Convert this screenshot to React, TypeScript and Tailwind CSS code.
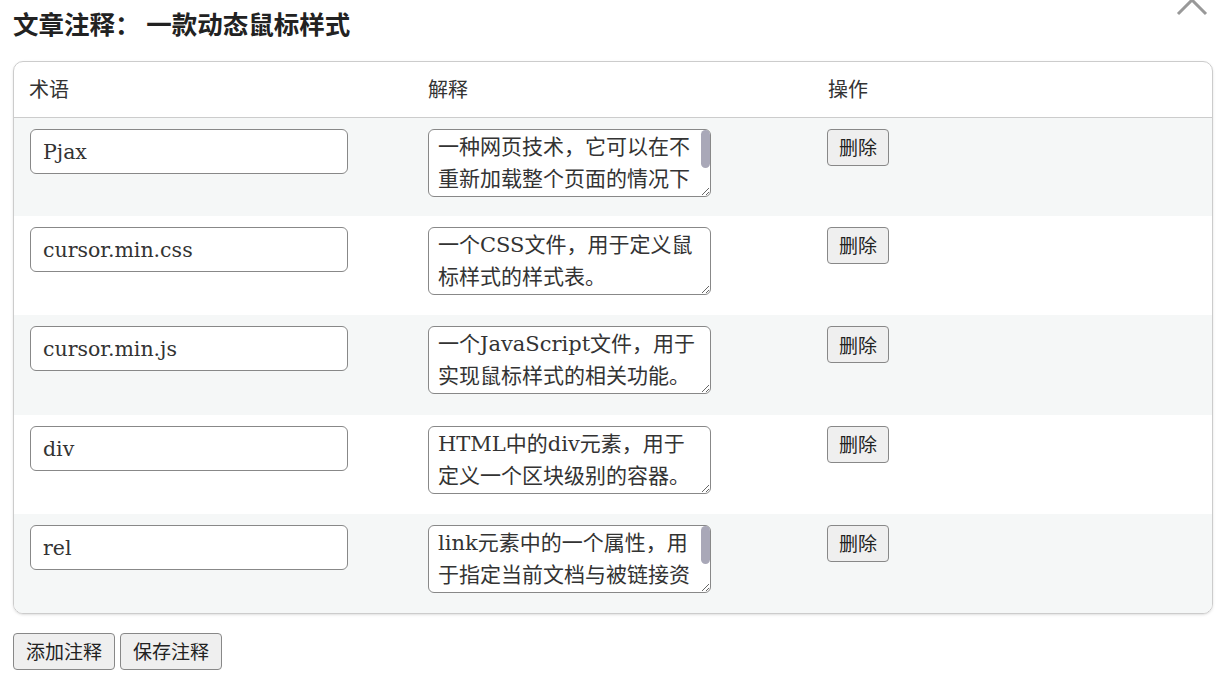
const rows = [
  { term: 'Pjax', desc: '一种网页技术，它可以在不重新加载整个页面的情况下更新页面内容，提升浏览体验。', scroll: true },
  { term: 'cursor.min.css', desc: '一个CSS文件，用于定义鼠标样式的样式表。', scroll: false },
  { term: 'cursor.min.js', desc: '一个JavaScript文件，用于实现鼠标样式的相关功能。', scroll: false },
  { term: 'div', desc: 'HTML中的div元素，用于定义一个区块级别的容器。', scroll: false },
  { term: 'rel', desc: 'link元素中的一个属性，用于指定当前文档与被链接资源之间的关系。', scroll: true },
]

const font = { fontFamily: '"DejaVu Serif", "Noto Sans CJK SC", serif' }

export default function App() {
  return (
    <div
      className="relative w-[1218px] h-[682px] overflow-hidden bg-white pl-[13px] pr-[5px] text-[#333]"
      style={{ fontFamily: '"Noto Sans CJK SC", sans-serif' }}
    >
      <svg className="absolute right-[8px] top-[-18px]" width="36" height="36" viewBox="0 0 36 36">
        <path d="M4 4 L32 32 M32 4 L4 32" stroke="#999" strokeWidth="3" fill="none" />
      </svg>
      <h1 className="pt-[5px] h-[61px] text-[25.5px] font-bold leading-[36px] text-[#222]">文章注释： 一款动态鼠标样式</h1>
      <div className="rounded-[10px] border border-[#ccc] overflow-hidden shadow-sm">
        <table className="w-full border-collapse table-fixed">
          <thead>
            <tr className="h-[55px] border-b border-[#ccc] text-left">
              <th className="w-[400px] pl-[15px] pb-[1px] text-[20px] font-normal">术语</th>
              <th className="w-[400px] pl-[14px] pb-[1px] text-[20px] font-normal">解释</th>
              <th className="pl-[14px] pb-[1px] text-[20px] font-normal">操作</th>
            </tr>
          </thead>
          <tbody>
            {rows.map((r, i) => (
              <tr key={i} className={`h-[99.2px] align-top ${i % 2 === 0 ? 'bg-[#f5f7f7]' : 'bg-white'}`}>
                <td className="pl-[16px] pt-[11px]">
                  <input
                    defaultValue={r.term}
                    className="w-[318px] h-[45px] rounded-[6px] border border-[#888] bg-white px-[12px] pt-[1px] text-[20.5px] text-[#333] outline-none"
                    style={font}
                  />
                </td>
                <td className="pl-[14px] pt-[11px]">
                  <div className="relative w-[283px]">
                    <textarea
                      defaultValue={r.desc}
                      className="block w-[283px] h-[68px] overflow-hidden rounded-[6px] border border-[#888] bg-white pl-[9px] pr-[12px] py-[1px] text-[21px] leading-[32px] text-[#333] outline-none"
                      style={font}
                    />
                    {r.scroll && (
                      <div className="absolute right-[1px] top-[1px] h-[38px] w-[9px] rounded-full bg-[#a9a8b8]" />
                    )}
                  </div>
                </td>
                <td className="pl-[13px] pt-[11px]">
                  <button className="h-[37px] rounded-[4px] border border-[#888] bg-[#efefef] px-[11px] text-[19px] text-[#222]">
                    删除
                  </button>
                </td>
              </tr>
            ))}
          </tbody>
        </table>
      </div>
      <div className="mt-[19px] flex gap-[5px]">
        <button className="h-[37px] w-[102px] rounded-[4px] border border-[#888] bg-[#efefef] text-[19px] text-[#222]">添加注释</button>
        <button className="h-[37px] w-[102px] rounded-[4px] border border-[#888] bg-[#efefef] text-[19px] text-[#222]">保存注释</button>
      </div>
    </div>
  )
}
